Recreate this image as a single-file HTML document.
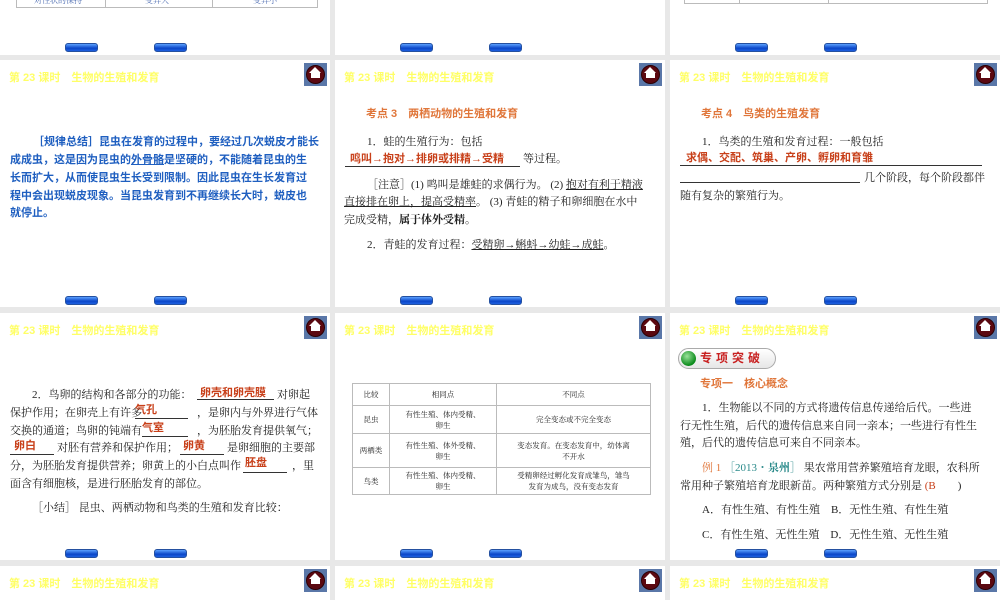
<!DOCTYPE html>
<html style="height:600px;overflow:hidden"><head><meta charset="utf-8"><style>
*{margin:0;padding:0;box-sizing:border-box}
html,body{width:1000px;height:600px;overflow:hidden}
body{background:#e8e8e8;position:relative;font-family:"Liberation Serif","Noto Serif CJK SC",serif;color:#222}
.s{position:absolute;background:#fff;width:330px;height:247px}
.t{position:absolute;white-space:nowrap;font-size:11px;line-height:14px}
.ttl{position:absolute;font-family:"Liberation Sans","Noto Sans CJK SC",sans-serif;font-weight:bold;font-size:11px;color:#ffff66;white-space:nowrap;line-height:14px}
.home{position:absolute;width:23px;height:23px;background:#5a77a8}
.home i{position:absolute;left:2px;top:2px;width:19px;height:19px;border-radius:50%;background:#5b0810;border:1px solid #2a0005}
.home b{position:absolute;left:7px;top:9px;width:9px;height:6px;background:#fff}
.home u{position:absolute;left:5px;top:4px;width:0;height:0;border-left:6.5px solid transparent;border-right:6.5px solid transparent;border-bottom:6px solid #fff}
.btn{position:absolute;width:33px;height:9px;border-radius:3px;background:linear-gradient(#5aa0ff,#0b46c8 60%,#1d5fe0);border:1px solid #2450a0}
.red{color:#c8401a;font-family:"Liberation Sans","Noto Sans CJK SC",sans-serif;font-weight:bold}
.or{color:#e0763a;font-family:"Liberation Sans","Noto Sans CJK SC",sans-serif;font-weight:bold}
.ul{position:absolute;height:1px;background:#333}
.blue{color:#1f5fc0;font-family:"Liberation Sans","Noto Sans CJK SC",sans-serif;font-weight:bold}
table{border-collapse:collapse;position:absolute;font-size:7.5px;line-height:11px;text-align:center}
td{border:1px solid #bbb;padding:0}
</style></head><body>
<!-- row 0 -->
<div class="s" style="left:0;top:-192px"></div>
<div class="s" style="left:335px;top:-192px"></div>
<div class="s" style="left:670px;top:-192px"></div>
<div style="position:absolute;left:16px;top:-2px;width:302px;height:10px;border:1px solid #bbb;border-top:none"></div>
<div style="position:absolute;left:105px;top:0;width:1px;height:8px;background:#bbb"></div>
<div style="position:absolute;left:212px;top:0;width:1px;height:8px;background:#bbb"></div>
<div class="t" style="left:34px;top:-6px;font-size:8px;color:#4a6ab0">对性状的保持</div>
<div class="t" style="left:145px;top:-6px;font-size:8px;color:#4a6ab0">变异大</div>
<div class="t" style="left:253px;top:-6px;font-size:8px;color:#4a6ab0">变异小</div>
<div style="position:absolute;left:684px;top:-2px;width:304px;height:6px;border:1px solid #bbb;border-top:none"></div>
<div style="position:absolute;left:739px;top:0;width:1px;height:4px;background:#bbb"></div>
<div style="position:absolute;left:828px;top:0;width:1px;height:4px;background:#bbb"></div>
<div class="btn" style="left:65px;top:43px"></div><div class="btn" style="left:154px;top:43px"></div>
<div class="btn" style="left:400px;top:43px"></div><div class="btn" style="left:489px;top:43px"></div>
<div class="btn" style="left:735px;top:43px"></div><div class="btn" style="left:824px;top:43px"></div>

<!-- row 1 -->
<div class="s" style="left:0;top:60px"></div>
<div class="s" style="left:335px;top:60px"></div>
<div class="s" style="left:670px;top:60px"></div>
<div class="ttl" style="left:9px;top:71px">第 23 课时　生物的生殖和发育</div>
<div class="ttl" style="left:344px;top:71px">第 23 课时　生物的生殖和发育</div>
<div class="ttl" style="left:679px;top:71px">第 23 课时　生物的生殖和发育</div>
<div class="home" style="left:304px;top:63px"><i></i><u></u><b></b></div>
<div class="home" style="left:639px;top:63px"><i></i><u></u><b></b></div>
<div class="home" style="left:974px;top:63px"><i></i><u></u><b></b></div>

<div class="t blue" style="left:33px;top:135px">［规律总结］昆虫在发育的过程中，要经过几次蜕皮才能长</div>
<div class="t blue" style="left:10px;top:153px">成成虫，这是因为昆虫的<u>外骨骼</u>是坚硬的，不能随着昆虫的生</div>
<div class="t blue" style="left:10px;top:171px">长而扩大，从而使昆虫生长受到限制。因此昆虫在生长发育过</div>
<div class="t blue" style="left:10px;top:189px">程中会出现蜕皮现象。当昆虫发育到不再继续长大时，蜕皮也</div>
<div class="t blue" style="left:10px;top:206px">就停止。</div>

<div class="t or" style="left:366px;top:107px">考点 3　两栖动物的生殖和发育</div>
<div class="t" style="left:367px;top:135px">1．蛙的生殖行为：包括</div>
<div class="t red" style="left:350px;top:152px">鸣叫→抱对→排卵或排精→受精</div>
<div class="ul" style="left:345px;top:166px;width:175px"></div>
<div class="t" style="left:523px;top:152px">等过程。</div>
<div class="t" style="left:367px;top:178px">［注意］(1) 鸣叫是雄蛙的求偶行为。 (2) <u>抱对有利于精液</u></div>
<div class="t" style="left:344px;top:195px"><u>直接排在卵上，提高受精率</u>。 (3) 青蛙的精子和卵细胞在水中</div>
<div class="t" style="left:344px;top:213px">完成受精，<b>属于体外受精</b>。</div>
<div class="t" style="left:367px;top:238px">2．青蛙的发育过程：<u>受精卵→蝌蚪→幼蛙→成蛙</u>。</div>

<div class="t or" style="left:701px;top:107px">考点 4　鸟类的生殖发育</div>
<div class="t" style="left:702px;top:135px">1．鸟类的生殖和发育过程：一般包括</div>
<div class="t red" style="left:686px;top:151px">求偶、交配、筑巢、产卵、孵卵和育雏</div>
<div class="ul" style="left:680px;top:165px;width:302px"></div>
<div class="ul" style="left:680px;top:182px;width:180px"></div>
<div class="t" style="left:864px;top:171px">几个阶段，每个阶段都伴</div>
<div class="t" style="left:680px;top:189px">随有复杂的繁殖行为。</div>

<div class="btn" style="left:65px;top:296px"></div><div class="btn" style="left:154px;top:296px"></div>
<div class="btn" style="left:400px;top:296px"></div><div class="btn" style="left:489px;top:296px"></div>
<div class="btn" style="left:735px;top:296px"></div><div class="btn" style="left:824px;top:296px"></div>

<!-- row 2 -->
<div class="s" style="left:0;top:313px"></div>
<div class="s" style="left:335px;top:313px"></div>
<div class="s" style="left:670px;top:313px"></div>
<div class="ttl" style="left:9px;top:324px">第 23 课时　生物的生殖和发育</div>
<div class="ttl" style="left:344px;top:324px">第 23 课时　生物的生殖和发育</div>
<div class="ttl" style="left:679px;top:324px">第 23 课时　生物的生殖和发育</div>
<div class="home" style="left:304px;top:316px"><i></i><u></u><b></b></div>
<div class="home" style="left:639px;top:316px"><i></i><u></u><b></b></div>
<div class="home" style="left:974px;top:316px"><i></i><u></u><b></b></div>

<div class="t" style="left:32px;top:388px">2．鸟卵的结构和各部分的功能：</div>
<div class="t red" style="left:200px;top:386px">卵壳和卵壳膜</div><div class="ul" style="left:197px;top:399px;width:77px"></div>
<div class="t" style="left:277px;top:388px">对卵起</div>
<div class="t" style="left:10px;top:406px">保护作用；在卵壳上有许多　　　　　，是卵内与外界进行气体</div>
<div class="t red" style="left:135px;top:403px">气孔</div><div class="ul" style="left:135px;top:418px;width:53px"></div>
<div class="t" style="left:10px;top:424px">交换的通道；鸟卵的钝端有　　　　　，为胚胎发育提供氧气；</div>
<div class="t red" style="left:142px;top:421px">气室</div><div class="ul" style="left:142px;top:436px;width:46px"></div>
<div class="t red" style="left:14px;top:439px">卵白</div><div class="ul" style="left:10px;top:454px;width:44px"></div>
<div class="t" style="left:57px;top:441px">对胚有营养和保护作用；</div>
<div class="t red" style="left:183px;top:439px">卵黄</div><div class="ul" style="left:180px;top:454px;width:44px"></div>
<div class="t" style="left:227px;top:441px">是卵细胞的主要部</div>
<div class="t" style="left:10px;top:459px">分，为胚胎发育提供营养；卵黄上的小白点叫作</div>
<div class="t red" style="left:245px;top:456px">胚盘</div><div class="ul" style="left:243px;top:472px;width:44px"></div>
<div class="t" style="left:292px;top:459px">，里</div>
<div class="t" style="left:10px;top:477px">面含有细胞核，是进行胚胎发育的部位。</div>
<div class="t" style="left:32px;top:501px">［小结］ 昆虫、两栖动物和鸟类的生殖和发育比较：</div>

<table style="left:352px;top:383px;width:299px">
<tr style="height:22px"><td style="width:37px">比较</td><td style="width:107px">相同点</td><td>不同点</td></tr>
<tr style="height:28px"><td>昆虫</td><td>有性生殖、体内受精、<br>卵生</td><td>完全变态或不完全变态</td></tr>
<tr style="height:34px"><td>两栖类</td><td>有性生殖、体外受精、<br>卵生</td><td>变态发育。在变态发育中，幼体离<br>不开水</td></tr>
<tr style="height:27px"><td>鸟类</td><td>有性生殖、体内受精、<br>卵生</td><td>受精卵经过孵化发育成雏鸟，雏鸟<br>发育为成鸟，没有变态发育</td></tr>
</table>

<div style="position:absolute;left:678px;top:348px;width:98px;height:21px;border-radius:11px;border:1px solid #aaa;background:linear-gradient(#fff,#e6e6e6)"></div>
<div style="position:absolute;left:681px;top:351px;width:15px;height:15px;border-radius:50%;background:radial-gradient(circle at 40% 35%,#9be39b,#0a8a1a 70%)"></div>
<div class="t" style="left:700px;top:351px;font-family:'Liberation Sans','Noto Sans CJK SC',sans-serif;font-weight:bold;font-size:12px;color:#c82020;letter-spacing:4px">专项突破</div>
<div class="t or" style="left:700px;top:377px">专项一　核心概念</div>
<div class="t" style="left:702px;top:401px">1．生物能以不同的方式将遗传信息传递给后代。一些进</div>
<div class="t" style="left:680px;top:419px">行无性生殖，后代的遗传信息来自同一亲本；一些进行有性生</div>
<div class="t" style="left:680px;top:436px">殖，后代的遗传信息可来自不同亲本。</div>
<div class="t" style="left:702px;top:461px"><span style="color:#e0763a">例 1</span> <span style="color:#2a8a8a">［2013・<b>泉州</b>］</span> 果农常用营养繁殖培育龙眼，农科所</div>
<div class="t" style="left:680px;top:479px">常用种子繁殖培育龙眼新苗。两种繁殖方式分别是 <span style="color:#c8401a">(B</span>　　)</div>
<div class="t" style="left:702px;top:503px">A．有性生殖、有性生殖　B．无性生殖、有性生殖</div>
<div class="t" style="left:702px;top:528px">C．有性生殖、无性生殖　D．无性生殖、无性生殖</div>

<div class="btn" style="left:65px;top:549px"></div><div class="btn" style="left:154px;top:549px"></div>
<div class="btn" style="left:400px;top:549px"></div><div class="btn" style="left:489px;top:549px"></div>
<div class="btn" style="left:735px;top:549px"></div><div class="btn" style="left:824px;top:549px"></div>

<!-- row 3 -->
<div class="s" style="left:0;top:566px;height:34px"></div>
<div class="s" style="left:335px;top:566px;height:34px"></div>
<div class="s" style="left:670px;top:566px;height:34px"></div>
<div class="ttl" style="left:9px;top:577px">第 23 课时　生物的生殖和发育</div>
<div class="ttl" style="left:344px;top:577px">第 23 课时　生物的生殖和发育</div>
<div class="ttl" style="left:679px;top:577px">第 23 课时　生物的生殖和发育</div>
<div class="home" style="left:304px;top:569px"><i></i><u></u><b></b></div>
<div class="home" style="left:639px;top:569px"><i></i><u></u><b></b></div>
<div class="home" style="left:974px;top:569px"><i></i><u></u><b></b></div>
</body></html>
